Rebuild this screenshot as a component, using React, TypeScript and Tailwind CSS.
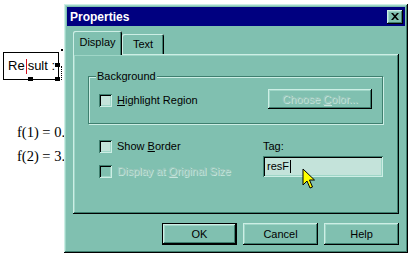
import type { ReactNode } from "react";

const raised =
  "shadow-[inset_-1px_-1px_0_#000,inset_1px_1px_0_#cdeee5,inset_-2px_-2px_0_#3f7f6f,inset_2px_2px_0_#9fd6c7]";
const sunken =
  "shadow-[inset_1px_1px_0_#3f7f6f,inset_-1px_-1px_0_#cdeee5,inset_2px_2px_0_#000,inset_-2px_-2px_0_#9fd6c7]";
const disabledText = "text-[#9cc6bb] [text-shadow:1px_1px_0_#c6e6dd]";

function Checkbox({ label, disabled }: { label: ReactNode; disabled?: boolean }) {
  return (
    <div className="flex h-[13px] items-center gap-[5px]">
      <div className={`h-[13px] w-[13px] shrink-0 ${sunken} ${disabled ? "bg-[#80c0b0]" : "bg-[#c4e3da]"}`} />
      <span className={`leading-none ${disabled ? disabledText : "text-black"}`}>{label}</span>
    </div>
  );
}

function Button({ children, isDefault }: { children: ReactNode; isDefault?: boolean }) {
  return (
    <div className={`h-[22px] w-[75px] ${isDefault ? "border border-black" : ""}`}>
      <div className={`flex h-full w-full items-center justify-center bg-[#80c0b0] ${raised}`}>{children}</div>
    </div>
  );
}

function Cursor() {
  return (
    <svg className="absolute left-[302px] top-[168px]" width="14" height="22" viewBox="0 0 14 22">
      <path d="M1 1 L1 17 L5 13 L8 20 L10.5 19 L7.5 12 L12.5 12 Z" fill="#ffff00" stroke="#000" strokeWidth="1" strokeLinejoin="round" />
    </svg>
  );
}

export default function App() {
  return (
    <div className="relative h-[256px] w-[413px] overflow-hidden bg-white font-['Liberation_Sans',Arial,sans-serif] text-[11px]">
      {/* worksheet behind the dialog */}
      <div className="absolute left-[3px] top-[52px] flex h-[28px] w-[56px] items-center border border-black pl-[4px] text-[13px] text-black">
        <span>
          Re<span className="mx-[1px] inline-block h-[15px] w-px bg-[#d01020] align-middle" />sult :
        </span>
      </div>
      <div className="absolute left-[55px] top-[63px] h-[4px] w-[5px] bg-black" />
      <div className="absolute left-[28px] top-[77px] h-[4px] w-[5px] bg-black" />
      <div className="absolute left-[55px] top-[77px] h-[4px] w-[5px] bg-black" />
      <div className="absolute left-[61px] top-[49px] h-[2px] w-[2px] bg-black" />
      <div className="absolute left-[61px] top-[66px] h-[14px] w-px border-l border-dotted border-black" />
      <div className="absolute left-[17px] top-[123px] font-['Liberation_Serif',serif] text-[14.5px] leading-[18px] text-black">f(1) = 0.333</div>
      <div className="absolute left-[17px] top-[147px] font-['Liberation_Serif',serif] text-[14.5px] leading-[18px] text-black">f(2) = 3.000</div>

      {/* dialog */}
      <div className={`absolute left-[64px] top-[4px] flex h-[249px] w-[344px] flex-col bg-[#80c0b0] ${raised}`}>
        <div className="mx-[3px] mt-[3px] flex h-[19px] items-center justify-between bg-[#000080] pl-[3px] pr-[2px]">
          <span className="text-[12px] font-bold text-white">Properties</span>
          <div className={`flex h-[14px] w-[16px] items-center justify-center bg-[#80c0b0] ${raised}`}>
            <svg width="8" height="7" viewBox="0 0 8 7">
              <path d="M0 0h2l2 2.2L6 0h2L5 3.5 8 7H6L4 4.8 2 7H0l3-3.5z" fill="#000" />
            </svg>
          </div>
        </div>

        <div className="ml-[9px] mt-[4px] flex h-[24px] items-end">
          <div className="relative z-10 -mb-px flex h-[24px] w-[49px] items-center justify-center rounded-t-[2px] bg-[#80c0b0] pb-[2px] shadow-[inset_1px_1px_0_#cdeee5,inset_-1px_0_0_#000,inset_-2px_0_0_#3f7f6f]">
            Display
          </div>
          <div className="flex h-[20px] w-[42px] items-center justify-center rounded-t-[2px] shadow-[inset_1px_1px_0_#cdeee5,inset_-1px_0_0_#000,inset_-2px_0_0_#3f7f6f]">
            Text
          </div>
        </div>

        <div className={`ml-[9px] h-[160px] w-[326px] pl-[15px] pt-[22px] ${raised}`}>
          <div className="relative flex h-[48px] w-[295px] items-start justify-between border border-[#3f7f6f] shadow-[1px_1px_0_#cdeee5,inset_1px_1px_0_#cdeee5]">
            <span className="absolute -top-[8px] left-[7px] bg-[#80c0b0] px-[1px] leading-[14px]">Background</span>
            <div className="ml-[10px] mt-[17px]">
              <Checkbox label={<><span className="underline">H</span>ighlight Region</>} />
            </div>
            <div className={`mr-[10px] mt-[12px] flex h-[20px] w-[104px] items-center justify-center ${raised} ${disabledText}`}>
              <span>
                Choose <span className="underline">C</span>olor...
              </span>
            </div>
          </div>

          <div className="flex">
            <div className="ml-[11px] mt-[16px] flex w-[164px] flex-col gap-[12px]">
              <Checkbox label={<>Show <span className="underline">B</span>order</>} />
              <Checkbox disabled label={<>Display at <span className="underline">O</span>riginal Size</>} />
            </div>
            <div className="mt-[16px] flex flex-col">
              <span className="h-[13px] leading-[13px]">Tag:</span>
              <div className={`mt-[3px] flex h-[21px] w-[120px] items-center bg-[#c4e3da] pl-[4px] ${sunken}`}>
                <span>resF</span>
                <span className="ml-[1px] inline-block h-[13px] w-px bg-black" />
              </div>
            </div>
          </div>
        </div>

        <div className="mr-[9px] mt-[9px] flex justify-end gap-[6px]">
          <Button isDefault>OK</Button>
          <Button>Cancel</Button>
          <Button>Help</Button>
        </div>
      </div>

      <Cursor />
    </div>
  );
}
